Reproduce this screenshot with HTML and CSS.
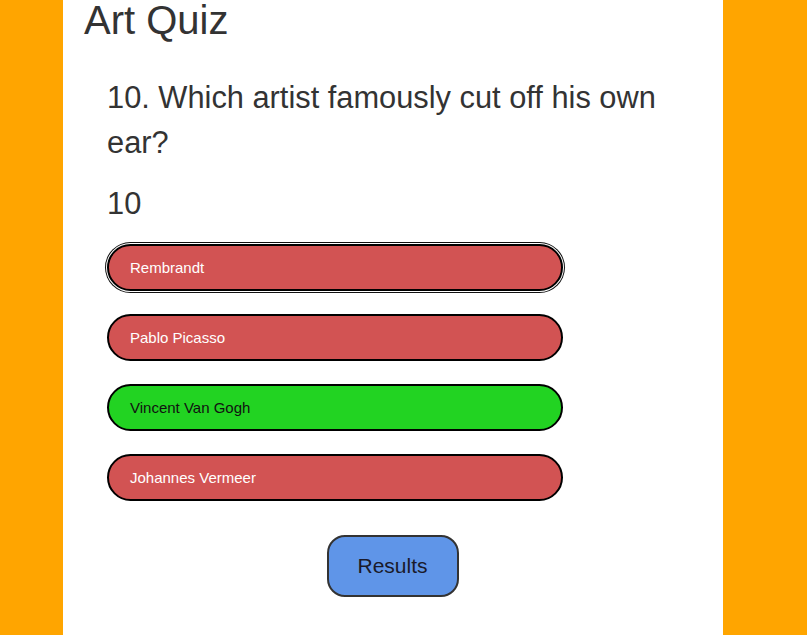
FILE: index.html
```html
<!DOCTYPE html>
<html lang="en">
<head>
<meta charset="utf-8">
<title>Art Quiz</title>
<link rel="stylesheet" href="styles.css">
</head>
<body>
  <main class="panel">
    <h1 class="title">Art Quiz</h1>
    <section class="quiz">
      <h2 class="question">10. Which artist famously cut off his own ear?</h2>
      <p class="count">10</p>
      <div class="answers">
        <button class="answer wrong focused">Rembrandt</button>
        <button class="answer wrong">Pablo Picasso</button>
        <button class="answer right">Vincent Van Gogh</button>
        <button class="answer wrong">Johannes Vermeer</button>
      </div>
    </section>
    <div class="actions">
      <button class="results">Results</button>
    </div>
  </main>
</body>
</html>
```

FILE: styles.css
```css
html, body {
  margin: 0;
  padding: 0;
  background: #ffa500;
  font-family: "Liberation Sans", Arial, sans-serif;
  color: #333;
}

.panel {
  box-sizing: border-box;
  width: 660px;
  min-height: 635px;
  margin-left: 63px;
  padding: 0 22px 40px 21px;
  background: #fff;
}

.title {
  margin: 0;
  font-size: 40px;
  line-height: 40px;
  font-weight: normal;
}

.quiz {
  padding: 0 22px 0 23px;
}

.question {
  margin: 35px 0 0;
  font-size: 30.8px;
  line-height: 45px;
  font-weight: normal;
}

.count {
  margin: 16px 0 0;
  font-size: 30.8px;
  line-height: 45px;
}

.answers {
  display: flex;
  flex-direction: column;
  gap: 23px;
  margin-top: 18px;
}

.answer {
  box-sizing: border-box;
  width: 456px;
  height: 47px;
  padding: 0 0 0 21px;
  border: 2px solid #000;
  border-radius: 23.5px;
  font-family: "Liberation Sans", Arial, sans-serif;
  font-size: 15px;
  text-align: left;
  cursor: pointer;
}

.wrong {
  background: #d25353;
  color: #fff;
}

.right {
  background: #22d322;
  color: #111;
}

.focused {
  box-shadow: 0 0 0 1px #fff, 0 0 0 2px #111;
}

.actions {
  display: flex;
  justify-content: center;
  margin-top: 34px;
}

.results {
  box-sizing: border-box;
  width: 132px;
  height: 62px;
  border: 2px solid #333;
  border-radius: 18px;
  background: #5f95e8;
  color: #1a1a2a;
  font-family: "Liberation Sans", Arial, sans-serif;
  font-size: 21px;
  cursor: pointer;
}
```
